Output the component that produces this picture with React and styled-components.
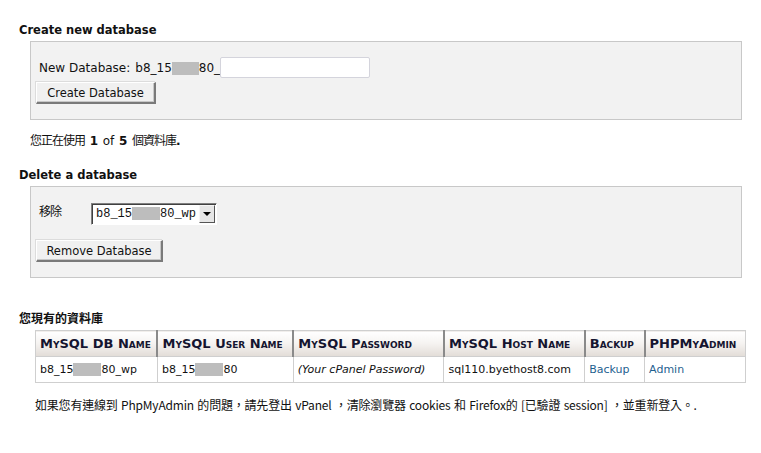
import React from 'react';
import styled, { createGlobalStyle } from 'styled-components';

const GlobalStyle = createGlobalStyle`
  body {
    margin: 0;
    background: #fff;
    font-family: "DejaVu Sans", Verdana, "Noto Sans CJK TC", sans-serif;
    font-size: 11px;
    color: #111;
  }
`;

const Page = styled.div`
  width: 761px;
  height: 453px;
  padding: 23px 0 0 19px;
  box-sizing: border-box;
`;

const Heading = styled.div`
  font-weight: bold;
  font-size: ${(p) => (p.$cjk ? '12px' : '11.5px')};
  line-height: 14px;
  height: 14px;
  margin-top: ${(p) => p.$top || 0}px;
  margin-bottom: 4px;
  font-family: "DejaVu Sans", "Noto Sans CJK TC", sans-serif;
`;

const Panel = styled.div`
  margin-left: 11px;
  width: 712px;
  box-sizing: border-box;
  height: ${(p) => p.$height}px;
  background: #f2f2f2;
  border: 1px solid #c8c8c8;
  padding: ${(p) => p.$top}px 5px 0 5px;
`;

const Row = styled.div`
  display: flex;
  align-items: ${(p) => p.$align || 'center'};
  height: ${(p) => p.$height}px;
  margin-bottom: ${(p) => p.$gap || 0}px;
`;

const Label = styled.span`
  margin-left: 3px;
  width: ${(p) => (p.$width ? `${p.$width}px` : 'auto')};
  white-space: pre;
  font-family: ${(p) => (p.$cjk ? '"Noto Sans CJK TC", sans-serif' : 'inherit')};
  font-size: 12px;
  letter-spacing: ${(p) => (p.$cjk ? '-1px' : '0')};
  margin-top: ${(p) => p.$top || 0}px;
`;

const Prefix = styled.span`
  margin-left: 5px;
`;

const Redacted = styled.span`
  display: inline-block;
  width: ${(p) => p.$w}px;
  height: 13px;
  background: #bdbdbd;
  vertical-align: middle;
`;

const TextInput = styled.div`
  width: 150px;
  height: 21px;
  box-sizing: border-box;
  background: #fff;
  border: 1px solid #d4d4dc;
  border-radius: 2px;
`;

const Button = styled.button`
  height: 22px;
  width: ${(p) => p.$width}px;
  box-sizing: border-box;
  padding: 0;
  background: #f0f0f0;
  border-style: solid;
  border-width: 1px 2px 2px 1px;
  border-color: #fff #7a7a7a #7a7a7a #fff;
  box-shadow: inset -1px -1px 0 #c8c8c8, -1px -1px 0 #dcdcdc;
  font-family: "DejaVu Sans", Verdana, sans-serif;
  font-size: 11.5px;
  color: #111;
  text-align: center;
`;

const Select = styled.div`
  display: flex;
  align-items: center;
  width: 126px;
  height: 22px;
  box-sizing: border-box;
  background: #fff;
  border-style: solid;
  border-width: 1px;
  border-color: #808080 #fff #fff #808080;
  box-shadow: inset 1px 1px 0 #404040;
  padding-left: 4px;
  font-family: "Liberation Mono", "Courier New", monospace;
  font-size: 12px;
`;

const SelectValue = styled.span`
  flex: 1;
  white-space: pre;
`;

const SelectArrow = styled.span`
  width: 16px;
  height: 18px;
  margin-right: 1px;
  box-sizing: border-box;
  background: #e6e6e6;
  border-style: solid;
  border-width: 1px;
  border-color: #f6f6f6 #555 #555 #f6f6f6;
  display: flex;
  align-items: center;
  justify-content: center;
  &::after {
    content: '';
    border-left: 4px solid transparent;
    border-right: 4px solid transparent;
    border-top: 4px solid #000;
  }
`;

const Note = styled.div`
  margin-left: ${(p) => p.$left || 11}px;
  height: 16px;
  line-height: 16px;
  font-size: 12px;
  letter-spacing: ${(p) => p.$spacing || 0}px;
  word-spacing: ${(p) => p.$words || 0}px;
  font-family: "Noto Sans CJK TC", sans-serif;
  white-space: nowrap;
  margin-top: ${(p) => p.$top}px;
  margin-bottom: ${(p) => p.$bottom || 0}px;
  b,
  span.latin {
    font-family: "DejaVu Sans", sans-serif;
    font-size: 12px;
    letter-spacing: 0;
  }
`;

const Table = styled.table`
  margin-left: 16px;
  width: 711px;
  border-collapse: collapse;
  border: 1px solid #cfcfcf;
`;

const HeadCell = styled.th`
  height: 25px;
  padding: 0 4px;
  text-align: left;
  white-space: nowrap;
  font-variant: small-caps;
  font-weight: bold;
  font-size: 13px;
  color: #151530;
  background: linear-gradient(#ffffff 0%, #f6f4f2 45%, #e2dcd7 100%);
  border-left: 2px solid #8a8a8a;
  border-bottom: 1px solid #cfcfcf;
  &:first-child {
    border-left: 1px solid #cfcfcf;
  }
`;

const Cell = styled.td`
  height: 25px;
  padding: 0 4px;
  white-space: nowrap;
  border-left: 1px solid #cfcfcf;
  font-style: ${(p) => (p.$italic ? 'italic' : 'normal')};
  color: ${(p) => (p.$link ? '#1f5f8f' : '#111')};
`;

const columns = [
  { title: 'MySQL DB Name', width: 122 },
  { title: 'MySQL User Name', width: 136 },
  { title: 'MySQL Password', width: 151 },
  { title: 'MySQL Host Name', width: 141 },
  { title: 'Backup', width: 60 },
  { title: 'PHPMyAdmin', width: 101 },
];

const App = () => (
  <>
    <GlobalStyle />
    <Page>
      <Heading>Create new database</Heading>
      <Panel $height={79} $top={15}>
        <Row $height={21} $gap={4}>
          <Label>
            New Database:<Prefix>b8_15<Redacted $w={27} />80_</Prefix>
          </Label>
          <TextInput />
        </Row>
        <Button $width={120}>Create Database</Button>
      </Panel>
      <Note $top={12} $bottom={20} $spacing={-1} $words={3}>
        您正在使用 <b>1</b> <span className="latin">of</span> <b>5</b> 個資料庫<b>.</b>
      </Note>
      <Heading>Delete a database</Heading>
      <Panel $height={92} $top={16}>
        <Row $height={22} $gap={15} $align="flex-start">
          <Label $cjk $width={52} $top={-1}>移除</Label>
          <Select>
            <SelectValue>
              b8_15<Redacted $w={28} />80_wp
            </SelectValue>
            <SelectArrow />
          </Select>
        </Row>
        <Button $width={127}>Remove Database</Button>
      </Panel>
      <Heading $cjk $top={34}>您現有的資料庫</Heading>
      <Table>
        <colgroup>
          {columns.map((c) => (
            <col key={c.title} style={{ width: c.width }} />
          ))}
        </colgroup>
        <thead>
          <tr>
            {columns.map((c) => (
              <HeadCell key={c.title}>{c.title}</HeadCell>
            ))}
          </tr>
        </thead>
        <tbody>
          <tr>
            <Cell>
              b8_15<Redacted $w={28} />80_wp
            </Cell>
            <Cell>
              b8_15<Redacted $w={28} />80
            </Cell>
            <Cell $italic>(Your cPanel Password)</Cell>
            <Cell>sql110.byethost8.com</Cell>
            <Cell $link>Backup</Cell>
            <Cell $link>Admin</Cell>
          </tr>
        </tbody>
      </Table>
      <Note $left={16} $top={14} $spacing={-0.2} $words={1}>
        如果您有連線到 PhpMyAdmin 的問題，請先登出 vPanel ，清除瀏覽器 cookies 和 Firefox的 [已驗證 session] ，並重新登入。.
      </Note>
    </Page>
  </>
);

export default App;
